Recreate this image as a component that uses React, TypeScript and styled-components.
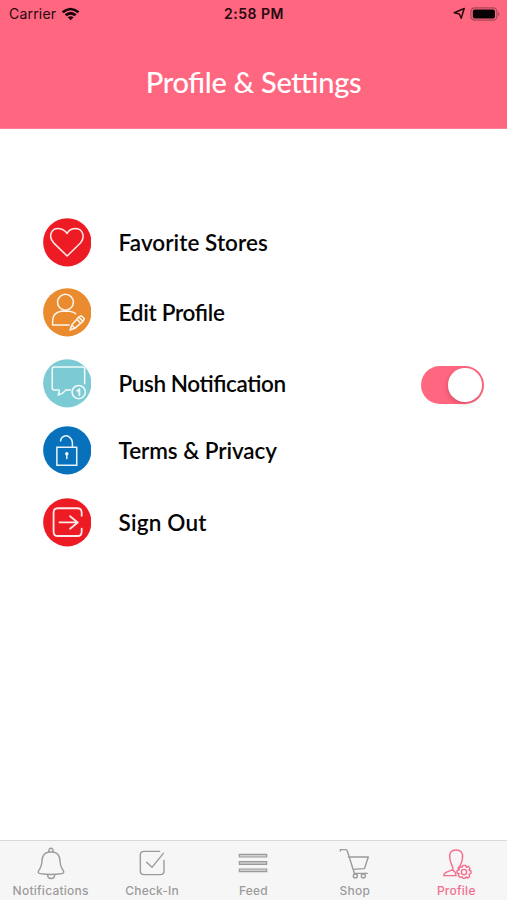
import React from "react";
import styled, { createGlobalStyle } from "styled-components";

const PINK = "#ff667f";

const GlobalStyle = createGlobalStyle`
  * { box-sizing: border-box; }
  body { margin: 0; background: #fff; font-family: Inter, "Liberation Sans", sans-serif; }
`;

const Screen = styled.main`
  display: flex;
  flex-direction: column;
  width: 507px;
  height: 900px;
  overflow: hidden;
  background: #fff;
`;

const Header = styled.header`
  height: 129px;
  flex: none;
  background: ${PINK};
  border-bottom: 1px solid #f78197;
`;

const StatusBar = styled.div`
  display: grid;
  grid-template-columns: 1fr auto 1fr;
  align-items: center;
  height: 27px;
  padding: 0 6px 0 9px;
  color: #26090f;
  font-size: 14px;
  line-height: 17px;
`;

const StatusGroup = styled.div<{ $end?: boolean }>`
  display: flex;
  align-items: center;
  justify-content: ${(p) => (p.$end ? "flex-end" : "flex-start")};
  gap: 5px;
`;

const Carrier = styled.span`
  letter-spacing: 0.2px;
`;

const Clock = styled.span`
  margin-right: 2px;
  font-weight: 600;
  letter-spacing: 0.5px;
`;

const Title = styled.h1<{ $spacing: number }>`
  margin: 37px 0 0;
  text-align: center;
  color: #fff;
  font-family: Lato, sans-serif;
  font-size: 29px;
  font-weight: 500;
  line-height: 36px;
  font-feature-settings: "liga" 1;
  letter-spacing: ${(p) => p.$spacing}px;
`;

const Settings = styled.ul`
  flex: 1;
  margin: 0;
  padding: 89px 23px 0 42.6px;
  list-style: none;
`;

const Row = styled.li<{ $gap: number }>`
  display: flex;
  align-items: center;
  height: 49px;
  margin-bottom: ${(p) => p.$gap}px;
`;

const RowIcon = styled.svg`
  flex: none;
  width: 48.6px;
  height: 48.6px;
  fill: none;
  stroke: #ffffffe8;
  stroke-width: 4.6;
  stroke-linecap: round;
  stroke-linejoin: round;
`;

const RowLabel = styled.span<{ $spacing: number }>`
  margin-left: 27.4px;
  color: #050505;
  font-family: Lato, sans-serif;
  font-size: 22.5px;
  font-weight: 600;
  line-height: 28px;
  white-space: nowrap;
  font-feature-settings: "liga" 1;
  letter-spacing: ${(p) => p.$spacing}px;
`;

const Switch = styled.button`
  display: flex;
  align-items: center;
  justify-content: flex-end;
  width: 63px;
  height: 38px;
  margin: 3px 0 0 auto;
  padding: 0 2.5px;
  border: 0;
  border-radius: 19px;
  background: ${PINK};
`;

const Knob = styled.span`
  width: 33.5px;
  height: 33.5px;
  border-radius: 50%;
  background: #fff;
  box-shadow: -1px 2px 4px rgba(80, 0, 20, 0.2);
`;

const TabBar = styled.nav`
  display: grid;
  grid-template-columns: repeat(5, 1fr);
  flex: none;
  height: 60px;
  border-top: 1px solid #d8d8d8;
  background: #f7f6f7;
`;

const Tab = styled.a<{ $active?: boolean }>`
  display: flex;
  flex-direction: column;
  align-items: center;
  padding-top: 2.4px;
  color: ${(p) => (p.$active ? "#f36e8c" : "#9b9b9b")};
  font-size: 12px;
  font-weight: 500;
  line-height: 16px;
`;

const TabIcon = styled.svg`
  width: 40px;
  height: 38px;
  margin-bottom: 1.6px;
  fill: none;
  stroke: currentColor;
  stroke-width: 4.2;
  stroke-linecap: round;
  stroke-linejoin: round;
`;

const TabLabel = styled.span<{ $spacing: number }>`
  letter-spacing: ${(p) => p.$spacing}px;
`;

const rows = [
  {
    label: "Favorite Stores",
    spacing: 0.05,
    gap: 21,
    color: "#ed1c24",
    art: <path d="M73 115L33 76C14 56 25 32 46 32C60 32 70 41 73 47C77 38 87 32 100 32C121 34 128 57 114 75Z" />,
  },
  {
    label: "Edit Profile",
    spacing: -0.3,
    gap: 22,
    color: "#e98b2e",
    art: (
      <>
        <circle cx="68" cy="43" r="24" />
        <path d="M79 112H29V101C29 82 41 72 55 70H80Q92 71 99 78" />
        <path d="M108 88L116 84L125 93L121 101L96 122L82 127L87 112ZM108 88L121 101M87 112L96 122M102 94L114 107" />
      </>
    ),
  },
  {
    label: "Push Notification",
    spacing: -0.42,
    gap: 18,
    color: "#7ccbd4",
    art: (
      <>
        <path d="M83 94H69Q61 105 46 109Q50 101 49 94H34Q28 94 28 88V30Q28 24 34 24H120Q126 24 126 30V75" />
        <circle cx="108" cy="100" r="20" />
        <path d="M104 96L110 92V109" strokeWidth="6" />
      </>
    ),
  },
  {
    label: "Terms & Privacy",
    spacing: -0.08,
    gap: 23,
    color: "#0871bc",
    art: (
      <>
        <path d="M42 64H102V119H42ZM53 47C54 29 71 27 79 33Q89 40 89 53V64" strokeLinecap="butt" strokeLinejoin="miter" />
        <circle cx="72" cy="84" r="3" fill="white" />
        <path d="M72 86V98" />
      </>
    ),
  },
  {
    label: "Sign Out",
    spacing: 0.2,
    gap: 0,
    color: "#ed1c24",
    art: <path d="M117 54V44Q117 31 104 31H45Q32 31 32 44V102Q32 115 45 115H104Q117 115 117 102V93M50 74H104M82 55L105 74L82 93" strokeWidth="5.5" />,
  },
];

const tabs = [
  {
    label: "Notifications",
    spacing: 0.25,
    art: (
      <>
        <path d="M23 83C29 75 33 65 33 52C34 38 40 29 54 27H66C80 29 86 38 87 52C87 65 91 75 97 83Q101 91 92 92Q60 97 28 92Q19 91 23 83Z" />
        <path d="M54 27C51 12 69 12 66 27M50 96C50 110 71 110 71 96" />
      </>
    ),
  },
  {
    label: "Check-In",
    spacing: 0.2,
    art: <path d="M83 25H36Q25 25 25 36V84Q25 95 36 95H85Q96 95 96 84V52M44 58L60 73L94 31" />,
  },
  {
    label: "Feed",
    spacing: 0.2,
    art: <path d="M19 34H101V42H19ZM19 56H101V64H19ZM19 78H101V86H19Z" fill="#d0d0d0" strokeWidth="3.6" strokeLinejoin="miter" />,
  },
  {
    label: "Shop",
    spacing: 0.25,
    art: (
      <>
        <path d="M16 24V20H31Q36 20 37 24L58 91H97M40 42H100L88 77L54 79" />
        <circle cx="61" cy="99" r="6" />
        <circle cx="85" cy="99" r="6" />
      </>
    ),
  },
  {
    label: "Profile",
    spacing: 0.25,
    active: true,
    art: (
      <>
        <path d="M51 80C52 71 44 63 42 49C38 29 46 21 60 21C75 21 83 30 79 49C77 63 69 71 70 78M51 80L30 88Q23 92 23 98H60M49 80Q59 86 60 98" />
        <path d="M81 67H89L91 73L97 70L102 76L99 81L105 84V91L99 94L101 100L96 105L90 102L87 106H80L78 101L72 103L67 98L69 92L63 90V83L69 81L66 75L72 70L78 73Z" />
        <circle cx="84" cy="87" r="8" />
      </>
    ),
  },
];

const WifiIcon = () => (
  <svg width="19" height="14" viewBox="0 0 57 42">
    <path d="M2 13Q29-9 55 13L50 19Q29 1 8 19ZM11 22Q29 7 47 22L41 28Q29 18 17 28ZM20 31Q29 24 38 31L29 40Z" fill="#17060a" />
  </svg>
);

const LocationIcon = () => (
  <svg width="12" height="13" viewBox="0 0 12 13" fill="none" stroke="#26090f" strokeWidth="1.5" strokeLinejoin="round">
    <path d="M11.2 1.5L1.2 5.8L6.4 7L8.2 11.3Z" />
  </svg>
);

const BatteryIcon = () => (
  <svg width="31" height="14" viewBox="0 0 31 14">
    <rect x=".9" y=".9" width="26" height="12.2" rx="3.7" fill="none" stroke="#a84556" strokeWidth="1.2" />
    <rect x="2.8" y="2.6" width="22.2" height="8.8" rx="2" fill="#080204" />
    <path d="M28.2 4.7Q31 7 28.2 9.3Z" fill="#a84556" />
  </svg>
);

export default function App() {
  return (
    <>
      <GlobalStyle />
      <Screen>
        <Header>
          <StatusBar>
            <StatusGroup>
              <Carrier>Carrier</Carrier>
              <WifiIcon />
            </StatusGroup>
            <Clock>2:58 PM</Clock>
            <StatusGroup $end>
              <LocationIcon />
              <BatteryIcon />
            </StatusGroup>
          </StatusBar>
          <Title $spacing={-0.3}>Profile &amp; Settings</Title>
        </Header>
        <Settings>
          {rows.map((row) => (
            <Row key={row.label} $gap={row.gap}>
              <RowIcon viewBox="0 0 147 147">
                <circle cx="73.5" cy="73.5" r="73" fill={row.color} stroke="none" />
                {row.art}
              </RowIcon>
              <RowLabel $spacing={row.spacing}>{row.label}</RowLabel>
              {row.label === "Push Notification" && (
                <Switch role="switch" aria-checked="true" aria-label={row.label}>
                  <Knob />
                </Switch>
              )}
            </Row>
          ))}
        </Settings>
        <TabBar>
          {tabs.map((tab) => (
            <Tab key={tab.label} $active={tab.active}>
              <TabIcon viewBox="0 0 120 114">{tab.art}</TabIcon>
              <TabLabel $spacing={tab.spacing}>{tab.label}</TabLabel>
            </Tab>
          ))}
        </TabBar>
      </Screen>
    </>
  );
}
